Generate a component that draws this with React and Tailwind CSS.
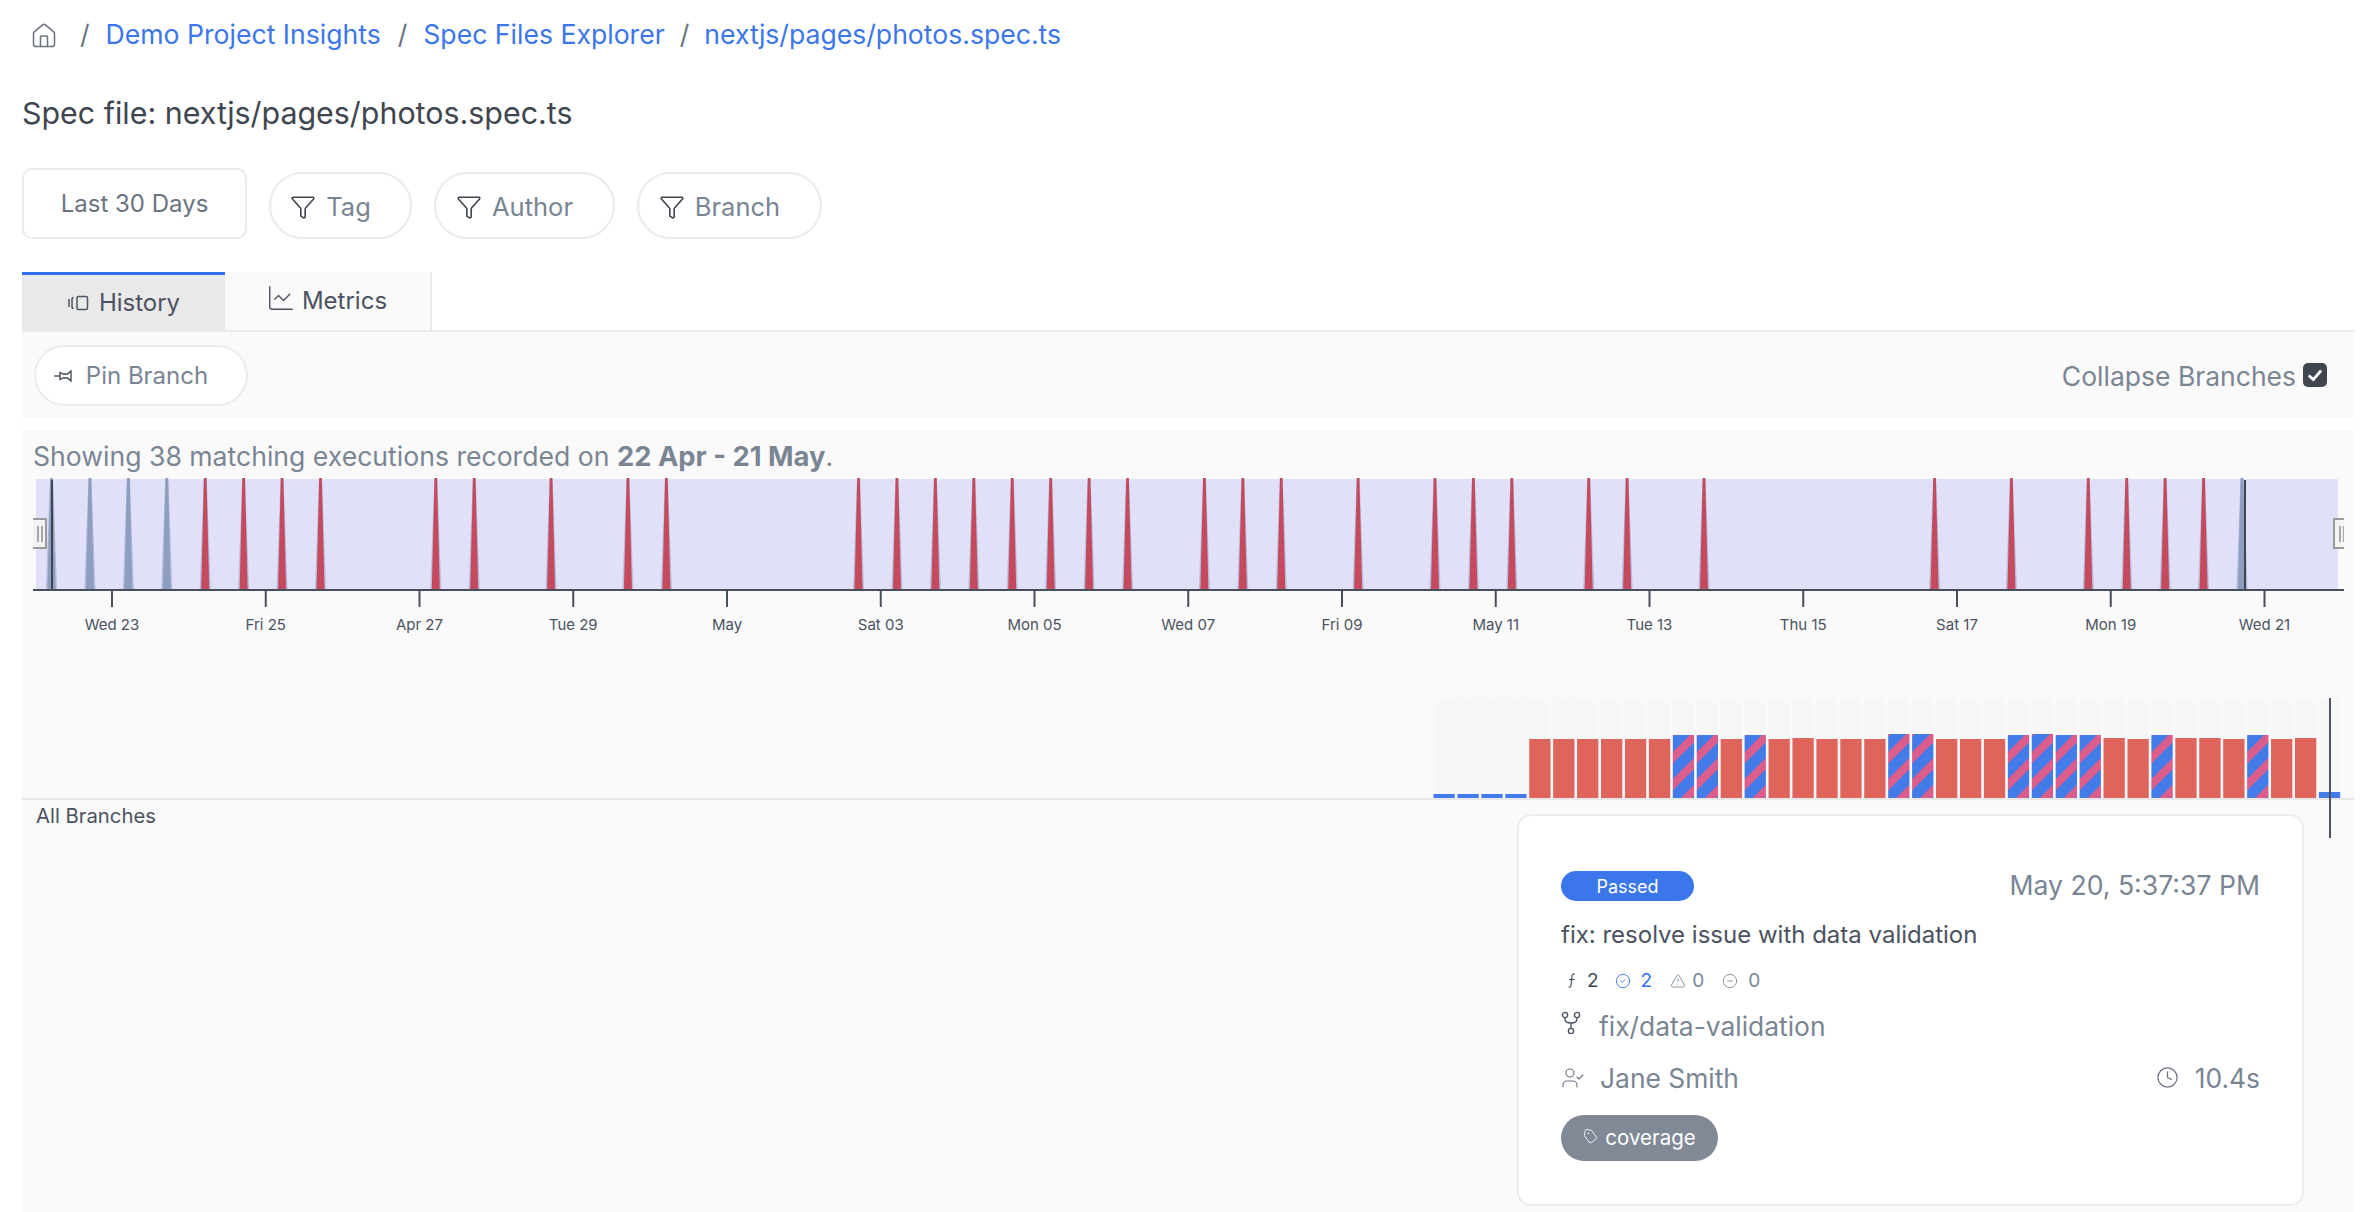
import React from 'react';
import { Home, Filter, LineChart, CircleCheck, TriangleAlert, CircleMinus, UserCheck, Clock, Tag } from 'lucide-react';

const font = { fontFamily: 'Inter, sans-serif' };

const spikes = [0, 1, 2, 3, 4, 5, 6, 7, 10, 11, 13, 15, 16, 21, 22, 23, 24, 25, 26, 27, 28, 30, 31, 32, 34, 36, 37, 38, 40, 41, 43, 49, 51, 53, 54, 55, 56, 57];
const blueSpikes = [0, 1, 2, 3, 57];
const ticks = ['Wed 23', 'Fri 25', 'Apr 27', 'Tue 29', 'May', 'Sat 03', 'Mon 05', 'Wed 07', 'Fri 09', 'May 11', 'Tue 13', 'Thu 15', 'Sat 17', 'Mon 19', 'Wed 21'];

// s: small blue, r: red, h: hatched, with the top edge of each bar
const bars = [
  ['s', 794], ['s', 794], ['s', 794], ['s', 794],
  ['r', 739], ['r', 739], ['r', 739], ['r', 739], ['r', 739], ['r', 739],
  ['h', 735], ['h', 735], ['r', 739], ['h', 735], ['r', 739], ['r', 738],
  ['r', 739], ['r', 739], ['r', 739], ['h', 734], ['h', 734], ['r', 739],
  ['r', 739], ['r', 739], ['h', 735], ['h', 734], ['h', 735], ['h', 735],
  ['r', 738], ['r', 739], ['h', 735], ['r', 738], ['r', 738], ['r', 739],
  ['h', 735], ['r', 739], ['r', 738], ['s', 792],
];

const Timeline = () => (
  <svg width="2332" height="170" className="block">
    <rect x="14" y="9" width="2302" height="111" fill="#e0e0f8" />
    {spikes.map((k) => {
      const x = 29.5 + k * 38.43;
      const blue = blueSpikes.includes(k);
      return (
        <g key={k}>
          <polygon points={`${x - 1.5},8 ${x + 1.5},8 ${x + 5.5},120 ${x - 5.5},120`} fill="#8e9ec4" opacity="0.55" />
          <polygon points={`${x - 1.3},8 ${x + 1.3},8 ${x + 4},120 ${x - 4},120`} fill={blue ? '#8e9ec0' : '#c54a5e'} />
        </g>
      );
    })}
    <rect x="29" y="10" width="2" height="110" fill="#3f4650" />
    <rect x="2222" y="10" width="2" height="110" fill="#3f4650" />
    <rect x="11" y="119" width="2311" height="2" fill="#484f5c" />
    {ticks.map((label, i) => {
      const x = 90 + i * 153.75;
      return (
        <g key={label}>
          <rect x={x - 1} y="121" width="2" height="16" fill="#484f5c" />
          <text x={x} y="159.5" textAnchor="middle" fontSize="15" fill="#4b5260" style={font}>{label}</text>
        </g>
      );
    })}
    <rect x="11" y="48" width="14" height="31" fill="#f3f3f3" />
    <path d="M11 49H24V78H11" fill="none" stroke="#9a9a9a" strokeWidth="2" />
    <rect x="15" y="56" width="2" height="16" fill="#a8a8a8" />
    <rect x="19" y="56" width="2" height="16" fill="#a8a8a8" />
    <rect x="2311" y="48" width="11" height="31" fill="#f3f3f3" />
    <path d="M2322 49H2312V78H2322" fill="none" stroke="#9a9a9a" strokeWidth="2" />
    <rect x="2317" y="56" width="2" height="16" fill="#a8a8a8" />
    <rect x="2321" y="56" width="1" height="16" fill="#a8a8a8" />
  </svg>
);

const BarStrip = () => (
  <svg width="2332" height="112" className="block">
    <defs>
      <pattern id="hatch" width="19" height="19" patternUnits="userSpaceOnUse" patternTransform="rotate(-45)">
        <rect width="19" height="19" fill="#437ce8" />
        <rect y="6" width="19" height="8" fill="#dc5c8c" />
      </pattern>
    </defs>
    <rect x="0" y="108" width="2332" height="2" fill="#e8e8e8" />
    {bars.map(([kind, top], i) => {
      const x = 1411.5 + i * 23.93;
      const y = top - 690;
      const h = 108 - y;
      return (
        <g key={i} transform={`translate(${x} 0)`}>
          <rect width="21.3" y="8" height="100" fill="#f7f7f7" />
          {kind === 'h' && <rect y={y} width="21.3" height={h} fill="url(#hatch)" />}
          {kind === 'r' && <rect y={y} width="21.3" height={h} fill="#df645c" />}
          {kind === 's' && <rect y={y} width="21.3" height={h} fill="#437ce8" />}
        </g>
      );
    })}
  </svg>
);

const FilterButton = ({ label, width }) => (
  <button className={`h-[67px] ${width} flex items-center justify-center gap-[10px] rounded-[34px] border-2 border-[#ebebeb] bg-white pr-[20px] pt-[3px] text-[25.5px] text-[#7a8594]`}>
    <Filter size={26} strokeWidth={1.5} className="text-[#3f4650]" />
    {label}
  </button>
);

const HistoryIcon = () => (
  <svg width="22" height="16" viewBox="0 0 22 16" fill="none" stroke="#4b5563" strokeWidth="1.5">
    <rect x="10" y="1.5" width="10.5" height="13" rx="1.5" />
    <path d="M6.5 2.5C5.2 2.5 5 3.5 5 4.5V11.5C5 12.5 5.2 13.5 6.5 13.5" />
    <path d="M2 4V12" />
  </svg>
);

const PinIcon = () => (
  <svg width="20" height="14" viewBox="0 0 20 14" fill="none" stroke="#3f4650" strokeWidth="1.3">
    <path d="M1 7H7" />
    <path d="M7 3.5L10 5H14.5L18 2V12L14.5 9H10L7 10.5Z" />
  </svg>
);

const FnIcon = () => (
  <svg width="14" height="18" viewBox="0 0 14 18" fill="none" stroke="#4b5563" strokeWidth="1.2">
    <path d="M10 2C8 1.5 7.2 2.5 7 4L6 13C5.8 14.8 5 15.6 3.5 15" />
    <path d="M4 7.5H9.5" />
  </svg>
);

const ForkIcon = () => (
  <svg width="20" height="24" viewBox="0 0 20 24" fill="none" stroke="#4b5563" strokeWidth="1.4" className="mr-[18px] -mt-[8px]">
    <circle cx="4" cy="4" r="2.6" />
    <circle cx="16" cy="4" r="2.6" />
    <circle cx="10" cy="20" r="2.6" />
    <path d="M4 6.6V8C4 10.5 6.5 12 10 12S16 10.5 16 8V6.6" />
    <path d="M10 12V17.4" />
  </svg>
);

const ExecutionCard = () => (
  <div className="absolute left-[1495px] top-[384px] w-[787px] h-[392px] rounded-[14px] border-2 border-[#ededed] bg-white pl-[42px] pr-[42px] pt-[55px]">
    <div className="flex items-center justify-between h-[30px]">
      <span className="w-[133px] h-[30px] flex items-center justify-center rounded-full bg-[#3b76ea] text-white text-[18px]">Passed</span>
      <span className="text-[26.6px] text-[#7a8594]">May 20, 5:37:37 PM</span>
    </div>
    <div className="mt-[20px] text-[24px] leading-[28px] text-[#4b5260]">fix: resolve issue with data validation</div>
    <div className="mt-[20px] h-[24px] flex items-center text-[19px] text-[#7a8594]">
      <span className="flex items-center gap-[8px] ml-[4px] text-[#3f4650]"><FnIcon />2</span>
      <span className="flex items-center gap-[10px] ml-[16px] text-[#2f6fed]"><CircleCheck size={16} strokeWidth={1.3} />2</span>
      <span className="flex items-center gap-[6px] ml-[18px]"><TriangleAlert size={16} strokeWidth={1.3} />0</span>
      <span className="flex items-center gap-[10px] ml-[18px]"><CircleMinus size={16} strokeWidth={1.3} />0</span>
    </div>
    <div className="mt-[19px] h-[30px] flex items-center text-[26.4px] text-[#7a8594]">
      <ForkIcon />
      fix/data-validation
    </div>
    <div className="mt-[22px] h-[30px] flex items-center justify-between text-[26.4px] text-[#7a8594]">
      <span className="flex items-center">
        <UserCheck size={24} strokeWidth={1.1} className="mr-[15px] -mt-[2px] text-[#6b7280]" />
        Jane Smith
      </span>
      <span className="flex items-center gap-[16px]">
        <Clock size={23} strokeWidth={1.3} className="-mt-[4px] text-[#6b7280]" />
        10.4s
      </span>
    </div>
    <div className="mt-[21px] w-[157px] h-[46px] flex items-center justify-center gap-[7px] rounded-full bg-[#808995] text-white text-[20.5px]">
      <Tag size={15} strokeWidth={1.3} className="-mt-[4px] rotate-[10deg]" />
      coverage
    </div>
  </div>
);

const App = () => (
  <div className="relative h-[1212px] w-full overflow-hidden bg-white pl-[22px] pr-[10px]" style={font}>
    <nav className="h-[70px] flex items-center text-[26.6px] text-[#3b76ea]">
      <Home size={28} strokeWidth={1.3} className="ml-[8px] mt-[1px] text-[#6b7280]" />
      <span className="ml-[22px] mr-[16px] text-[#6b7280]">/</span>
      <a>Demo Project Insights</a>
      <span className="ml-[17px] mr-[16px] text-[#6b7280]">/</span>
      <a>Spec Files Explorer</a>
      <span className="mx-[15px] text-[#6b7280]">/</span>
      <a>nextjs/pages/photos.spec.ts</a>
    </nav>

    <h1 className="mt-[24px] h-[40px] flex items-center text-[30.4px] font-normal text-[#3f4650]">Spec file: nextjs/pages/photos.spec.ts</h1>

    <div className="mt-[34px] flex items-end gap-[22px]">
      <button className="w-[225px] h-[71px] rounded-[10px] border-2 border-[#ebebeb] bg-white text-[24px] text-[#6b7280]">Last 30 Days</button>
      <FilterButton label="Tag" width="w-[143px]" />
      <FilterButton label="Author" width="w-[181px]" />
      <FilterButton label="Branch" width="w-[185px]" />
    </div>

    <div className="mt-[33px] flex h-[60px] border-b-2 border-[#ebebeb]">
      <div className="w-[203px] flex items-center justify-center gap-[10px] border-t-[3px] border-[#2f6fed] bg-[#e9e9e9] text-[24px] text-[#4b5260]">
        <HistoryIcon />
        History
      </div>
      <div className="w-[207px] flex items-center justify-center gap-[6px] border-r-2 border-[#ebebeb] bg-[#fafafa] pb-[1px] pr-[2px] text-[24px] text-[#4b5260]">
        <LineChart size={30} strokeWidth={1.1} className="-mt-[6px]" />
        Metrics
      </div>
    </div>

    <div className="h-[86px] flex items-center justify-between bg-[#fafafa] pl-[12px] pr-[27px]">
      <button className="w-[214px] h-[61px] flex items-center justify-center gap-[13px] rounded-full border-2 border-[#ebebeb] bg-white pr-[21px] pt-[1px] text-[24px] text-[#7a8594]">
        <PinIcon />
        Pin Branch
      </button>
      <label className="flex items-center gap-[7px] pt-[3px] text-[26.5px] text-[#7a8594]">
        Collapse Branches
        <span className="w-[24px] h-[24px] -mt-[3px] flex items-center justify-center rounded-[5px] bg-[#3f4650]">
          <svg width="18" height="18" viewBox="0 0 16 16" fill="none" stroke="white" strokeWidth="2.4"><path d="M2.5 8.5L6.5 12L13.5 4" /></svg>
        </span>
      </label>
    </div>

    <div className="relative mt-[12px] h-[782px] bg-[#fafafa]">
      <div className="h-[40px] pl-[11px] pt-[9px] text-[26.6px] leading-[34px] text-[#7a8594]">
        Showing 38 matching executions recorded on <b className="font-bold text-[27.4px]">22 Apr - 21 May</b>.
      </div>
      <Timeline />
      <div className="mt-[50px]"><BarStrip /></div>
      <div className="mt-[2px] pl-[14px] text-[20.3px] leading-[24px] text-[#4b5260]">All Branches</div>
      <div className="absolute left-[2307px] top-[268px] w-[2px] h-[140px] bg-[#4b5260]" />
      <ExecutionCard />
    </div>
  </div>
);

export default App;
